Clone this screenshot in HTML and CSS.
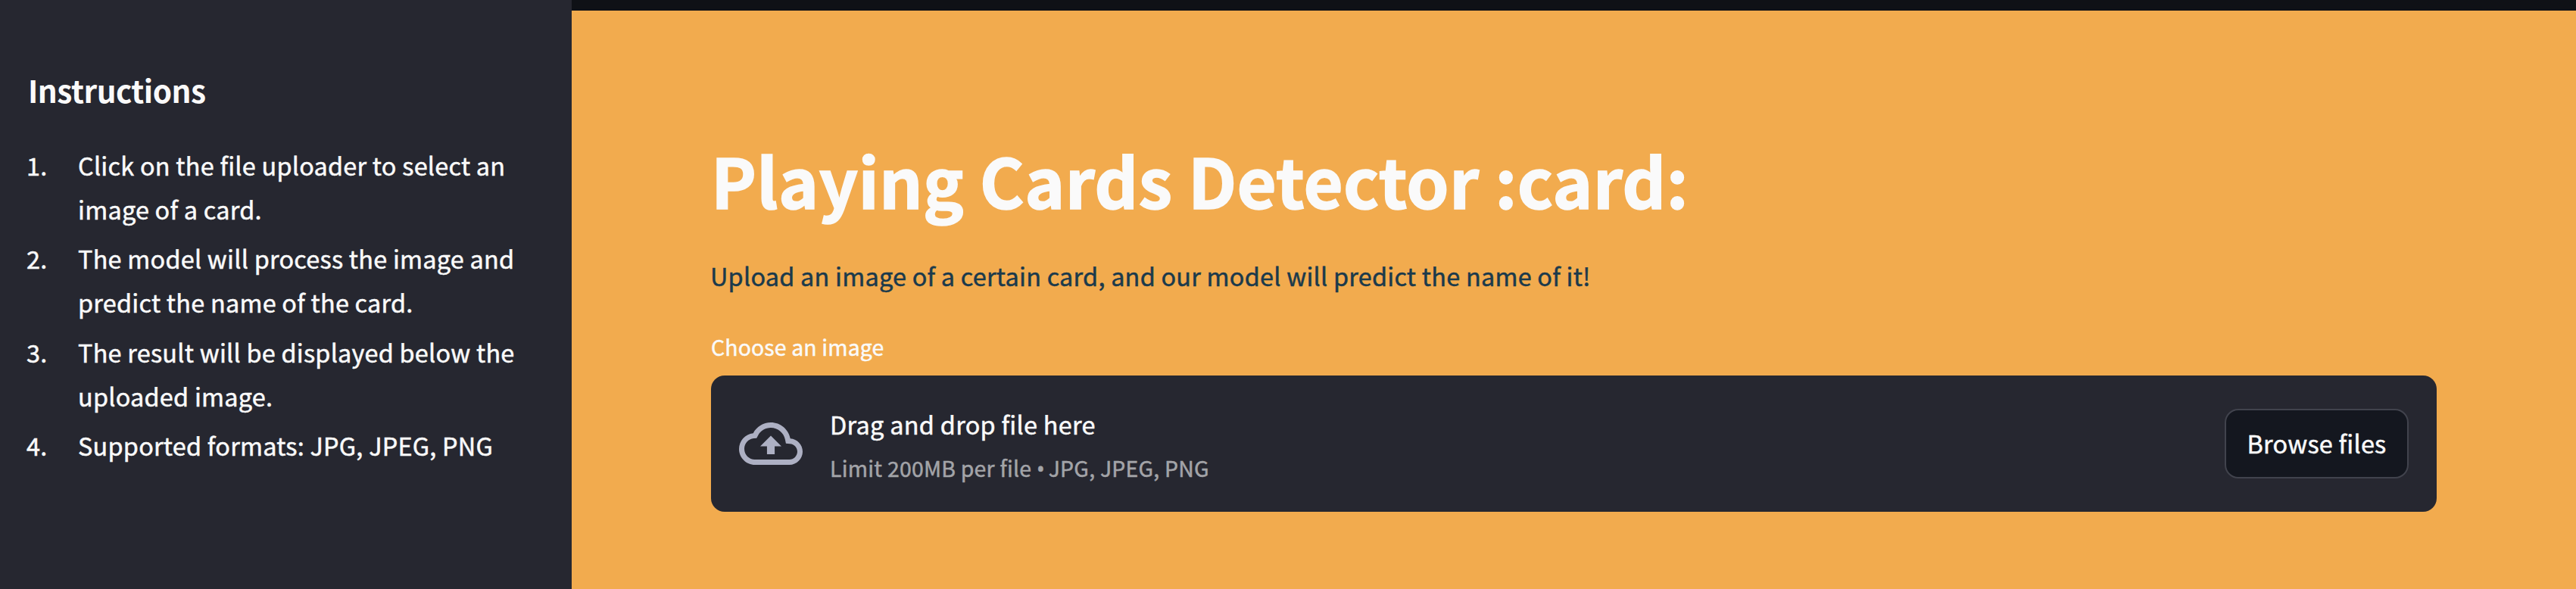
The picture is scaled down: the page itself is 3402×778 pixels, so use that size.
FILE: index.html
```html
<!DOCTYPE html>
<html lang="en">
<head>
<meta charset="utf-8">
<title>Playing Cards Detector</title>
<link rel="stylesheet" href="styles.css">
</head>
<body>
<div class="app">
  <aside class="sidebar">
    <h2 class="sidebar-title">Instructions</h2>
    <ol class="steps">
      <li class="step"><span class="num">1.</span><span class="step-text">Click on the file uploader to select an<br>image of a card.</span></li>
      <li class="step"><span class="num">2.</span><span class="step-text">The model will process the image and<br>predict the name of the card.</span></li>
      <li class="step"><span class="num">3.</span><span class="step-text">The result will be displayed below the<br>uploaded image.</span></li>
      <li class="step"><span class="num">4.</span><span class="step-text">Supported formats: JPG, JPEG, PNG</span></li>
    </ol>
  </aside>
  <main class="main">
    <div class="topbar"></div>
    <div class="content">
      <h1 class="title">Playing Cards Detector :card:</h1>
      <p class="lead">Upload an image of a certain card, and our model will predict the name of it!</p>
      <label class="label">Choose an image</label>
      <section class="dropzone">
        <svg class="cloud" viewBox="0 0 24 24" fill="currentColor"><path d="M19.35 10.04C18.67 6.59 15.64 4 12 4 9.11 4 6.6 5.64 5.35 8.04 2.34 8.36 0 10.91 0 14c0 3.31 2.69 6 6 6h13c2.76 0 5-2.24 5-5 0-2.64-2.05-4.78-4.65-4.96zM19 18H6c-2.21 0-4-1.79-4-4 0-2.05 1.53-3.76 3.56-3.97l1.07-.11.5-.95C8.08 7.14 9.94 6 12 6c2.62 0 4.88 1.86 5.39 4.43l.3 1.5 1.53.11c1.56.1 2.78 1.41 2.78 2.96 0 1.65-1.35 3-3 3zM8 13h2.55v3h2.9v-3H16l-4-4z"/></svg>
        <div class="hint">
          <span class="hint-main">Drag and drop file here</span>
          <span class="hint-sub">Limit 200MB per file <span class="dot">•</span> JPG, JPEG, PNG</span>
        </div>
        <button class="browse">Browse files</button>
      </section>
    </div>
  </main>
</div>
</body>
</html>
```
FILE: styles.css
```css
* { box-sizing: border-box; margin: 0; padding: 0; }
body {
  font-family: "Noto Sans CJK SC", "Noto Sans", sans-serif;
  font-size: 32.4px;
  line-height: 58px;
  letter-spacing: 0.25px;
  -webkit-text-stroke: 0.5px currentColor;
  color: #fafafa;
  white-space: nowrap;
}
.app { display: flex; width: 3402px; height: 778px; overflow: hidden; }
.sidebar { width: 755px; background: #262730; padding: 90px 36px 0; }
.sidebar-title { font-size: 40.5px; line-height: 58px; font-weight: 700; letter-spacing: -0.5px; padding-left: 1px; -webkit-text-stroke: 0; }
.steps { list-style: none; display: flex; flex-direction: column; gap: 7.4px; padding-top: 41px; }
.step { display: flex; }
.num { width: 68px; margin-left: -1px; }
.main { flex: 1; background: #f2ab4e; }
.topbar { height: 14px; background: #0f1116; }
.content { display: flex; flex-direction: column; padding: 164px 184px 0; }
.title { font-size: 90px; line-height: 118px; font-weight: 700; letter-spacing: 0.3px; -webkit-text-stroke: 1.6px currentColor; }
.lead { color: #1b3a4b; margin-top: 39px; margin-left: -1px; }
.label { font-size: 28.4px; line-height: 50px; margin-top: 40px; letter-spacing: 0.15px; }
.dropzone {
  display: flex;
  align-items: center;
  height: 180px;
  margin-top: 13px;
  padding: 0 37px;
  border-radius: 18px;
  background: #262730;
}
.cloud { width: 84px; height: 84px; margin-right: 36px; color: #adb0c3; }
.hint { display: flex; flex-direction: column; flex: 1; padding-top: 6px; }
.hint-main { letter-spacing: 0.3px; }
.hint-sub { font-size: 28.4px; color: #a3a4a8; }
.dot { font-family: "Noto Sans", sans-serif; letter-spacing: -1.5px; }
.browse {
  width: 243px;
  height: 92px;
  padding-bottom: 2px;
  border: 2px solid #41434d;
  border-radius: 18px;
  background: #14171f;
  color: #fafafa;
  font: inherit;
  letter-spacing: 0.24px;
}
```
